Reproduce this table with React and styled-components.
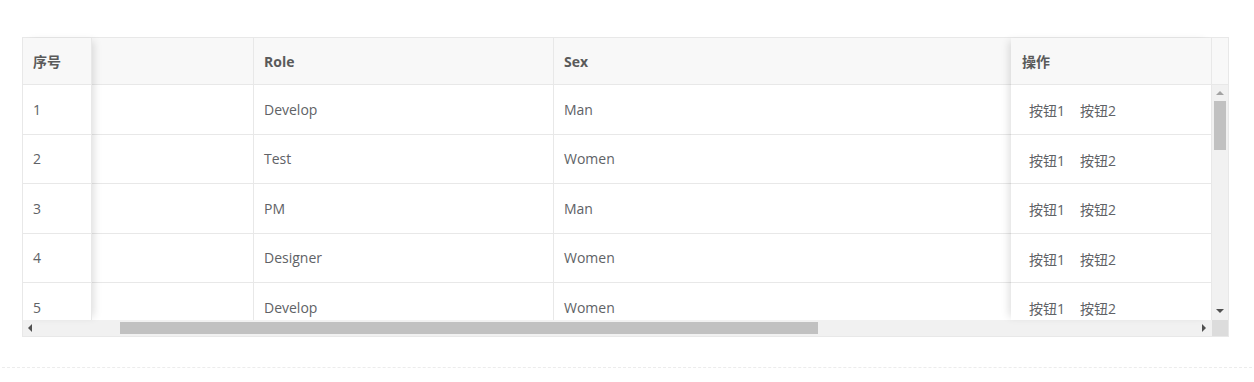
import React from "react";
import styled, { createGlobalStyle } from "styled-components";

const GlobalStyle = createGlobalStyle`
  html, body { margin: 0; padding: 0; background: #fff; }
  body { font-family: "Open Sans", "Noto Sans CJK SC", sans-serif; font-size: 14px; color: #606266; }
`;

const Page = styled.div`
  width: 1254px;
  height: 382px;
  box-sizing: border-box;
  padding: 37px 0 0 22px;
`;

const Section = styled.div`
  padding-bottom: 30px;
  border-bottom: 1px dashed #ececec;
  margin: 0 2px 0 -20px;
  padding-left: 20px;
`;

const TableBox = styled.div`
  width: 1207px;
  height: 300px;
  box-sizing: border-box;
  border: 1px solid #e8e8e8;
  display: grid;
  grid-template-columns: 69px 919px 201px 16px;
  grid-template-rows: 282px 16px;
  position: relative;
`;

const shadows = {
  left: "5px 0 8px -3px rgba(0,0,0,0.13)",
  right: "-5px 0 8px -3px rgba(0,0,0,0.13)",
};

const Column = styled.div`
  display: flex;
  flex-direction: column;
  overflow: hidden;
  background: #fff;
  position: relative;
  z-index: ${(p) => (p.$fixed ? 2 : 1)};
  box-shadow: ${(p) => (p.$fixed ? shadows[p.$fixed] : "none")};
  border-right: ${(p) => (p.$borderRight ? "1px solid #e8e8e8" : "none")};
  box-sizing: border-box;
`;

const Row = styled.div`
  display: flex;
  flex: none;
  height: ${(p) => (p.$header ? "47px" : "49.5px")};
  box-sizing: border-box;
  border-bottom: 1px solid #e8e8e8;
  background: ${(p) => (p.$header ? "#f8f8f8" : "#fff")};
`;

const Cell = styled.div`
  flex: none;
  width: ${(p) => p.$w};
  box-sizing: border-box;
  padding: 0 ${(p) => p.$pad || "10px"};
  display: flex;
  align-items: center;
  border-right: ${(p) => (p.$last ? "none" : "1px solid #e8e8e8")};
  font-weight: ${(p) => (p.$header ? 700 : 400)};
  color: ${(p) => (p.$header ? "#5a5a5a" : "#606266")};
  white-space: nowrap;
`;

const ActionButton = styled.span`
  padding: 0 7px;
  color: #606266;
  cursor: pointer;
`;

const Actions = styled.div`
  display: flex;
  gap: 1px;
  padding-top: 2px;
`;

const Gutter = styled.div`
  display: flex;
  flex-direction: column;
`;

const GutterHead = styled.div`
  height: 47px;
  box-sizing: border-box;
  background: #f8f8f8;
  border-bottom: 1px solid #e8e8e8;
  flex: none;
`;

const VTrack = styled.div`
  flex: 1;
  background: #f1f1f1;
  position: relative;
`;

const HTrack = styled.div`
  grid-column: 1 / 4;
  background: #f1f1f1;
  position: relative;
`;

const Corner = styled.div`
  background: #dcdcdc;
`;

const Thumb = styled.div`
  position: absolute;
  background: #c1c1c1;
`;

const Arrow = styled.div`
  position: absolute;
  width: 0;
  height: 0;
  border-style: solid;
`;

const UpArrow = styled(Arrow)`
  left: 4px;
  top: 6px;
  border-width: 0 4px 4px 4px;
  border-color: transparent transparent #a3a3a3 transparent;
`;
const DownArrow = styled(Arrow)`
  left: 4px;
  bottom: 7px;
  border-width: 4px 4px 0 4px;
  border-color: #505050 transparent transparent transparent;
`;
const LeftArrow = styled(Arrow)`
  left: 5px;
  top: 4px;
  border-width: 4px 4px 4px 0;
  border-color: transparent #505050 transparent transparent;
`;
const RightArrow = styled(Arrow)`
  right: 6px;
  top: 4px;
  border-width: 4px 0 4px 4px;
  border-color: transparent transparent transparent #505050;
`;

const rows = [
  { id: 1, role: "Develop", sex: "Man" },
  { id: 2, role: "Test", sex: "Women" },
  { id: 3, role: "PM", sex: "Man" },
  { id: 4, role: "Designer", sex: "Women" },
  { id: 5, role: "Develop", sex: "Women" },
];

export default function App() {
  return (
    <Page>
      <GlobalStyle />
      <Section>
        <TableBox>
          <Column $fixed="left" $borderRight>
            <Row $header>
              <Cell $w="68px" $header $last>序号</Cell>
            </Row>
            {rows.map((r) => (
              <Row key={r.id}>
                <Cell $w="68px" $last>{r.id}</Cell>
              </Row>
            ))}
          </Column>
          <Column>
            <Row $header>
              <Cell $w="162px" $header />
              <Cell $w="300px" $header>Role</Cell>
              <Cell $w="500px" $header>Sex</Cell>
            </Row>
            {rows.map((r) => (
              <Row key={r.id}>
                <Cell $w="162px" />
                <Cell $w="300px">{r.role}</Cell>
                <Cell $w="500px">{r.sex}</Cell>
              </Row>
            ))}
          </Column>
          <Column $fixed="right" $borderRight>
            <Row $header>
              <Cell $w="200px" $pad="11px" $header $last>操作</Cell>
            </Row>
            {rows.map((r) => (
              <Row key={r.id}>
                <Cell $w="200px" $pad="11px" $last>
                  <Actions>
                    <ActionButton>按钮1</ActionButton>
                    <ActionButton>按钮2</ActionButton>
                  </Actions>
                </Cell>
              </Row>
            ))}
          </Column>
          <Gutter>
            <GutterHead />
            <VTrack>
              <UpArrow />
              <Thumb style={{ left: 2, top: 16, width: 12, height: 49 }} />
              <DownArrow />
            </VTrack>
          </Gutter>
          <HTrack>
            <LeftArrow />
            <Thumb style={{ left: 97, top: 2, width: 698, height: 12 }} />
            <RightArrow />
          </HTrack>
          <Corner />
        </TableBox>
      </Section>
    </Page>
  );
}
